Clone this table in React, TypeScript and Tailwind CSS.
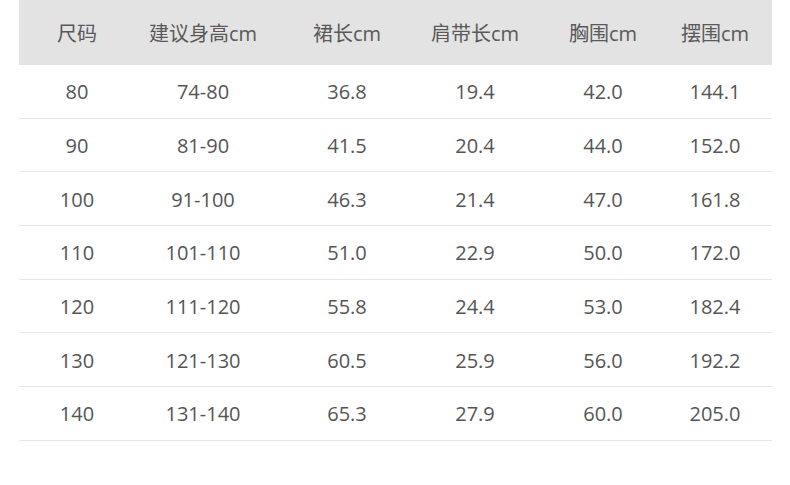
const headers = ["尺码", "建议身高cm", "裙长cm", "肩带长cm", "胸围cm", "摆围cm"];

const rows = [
  ["80", "74-80", "36.8", "19.4", "42.0", "144.1"],
  ["90", "81-90", "41.5", "20.4", "44.0", "152.0"],
  ["100", "91-100", "46.3", "21.4", "47.0", "161.8"],
  ["110", "101-110", "51.0", "22.9", "50.0", "172.0"],
  ["120", "111-120", "55.8", "24.4", "53.0", "182.4"],
  ["130", "121-130", "60.5", "25.9", "56.0", "192.2"],
  ["140", "131-140", "65.3", "27.9", "60.0", "205.0"],
];

const cols = "grid grid-cols-[116px_136px_152px_104px_152px_72px_21px]";

const App = () => {
  return (
    <div
      className="w-[790px] h-[485px] bg-white"
      style={{ fontFamily: '"Open Sans", "Noto Sans CJK SC", sans-serif' }}
    >
      <div className="ml-[19px] w-[753px]">
        {/* Header */}
        <div className={`${cols} h-[65px] items-center pt-[2px] bg-[#e3e3e3] text-[20px] text-[#595959]`}>
          {headers.map((h) => (
            <div key={h} className="text-center whitespace-nowrap">
              {h}
            </div>
          ))}
        </div>

        {/* Rows */}
        {rows.map((r) => (
          <div
            key={r[0]}
            className={`${cols} h-[53.7px] items-center pt-[2px] border-b border-[#e6e6e6] text-[20px] text-[#555555]`}
          >
            {r.map((v, i) => (
              <div key={i} className="text-center">
                {v}
              </div>
            ))}
          </div>
        ))}
      </div>
    </div>
  );
};

export default App;
